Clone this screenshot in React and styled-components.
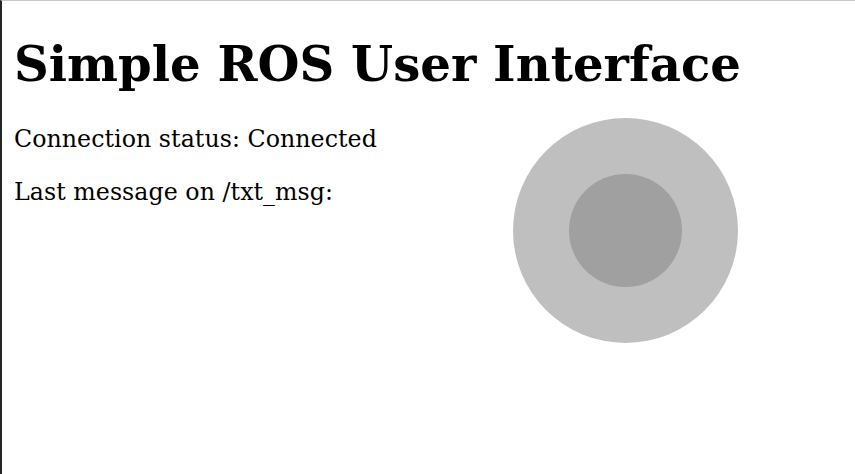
import React from 'react';
import styled, { createGlobalStyle } from 'styled-components';

const GlobalStyle = createGlobalStyle`
  html, body {
    margin: 0;
    padding: 0;
    background: #ffffff;
  }
  body {
    font-family: "DejaVu Serif", "Liberation Serif", serif;
    color: #000;
  }
`;

function App() {
  return (
    <>
      <GlobalStyle />
      <Page>
        <Title>Simple ROS User Interface</Title>
        <Row>
          <Info>
            <Line>Connection status: Connected</Line>
            <Line>Last message on /txt_msg:</Line>
          </Info>
          <JoystickZone>
            <Base>
              <Knob />
            </Base>
          </JoystickZone>
        </Row>
      </Page>
    </>
  );
}

export default App;

const Page = styled.div`
  box-sizing: border-box;
  min-height: 474px;
  border-left: 2px solid #252525;
  border-top: 1px solid #c8c8c8;
  padding: 0 12px;
  overflow: hidden;
`;

const Title = styled.h1`
  margin: 35px 0 0;
  font-size: 48.2px;
  font-weight: bold;
  line-height: 56px;
`;

const Row = styled.div`
  display: flex;
  align-items: flex-start;
`;

const Info = styled.div`
  flex: 1;
  padding-top: 33px;
`;

const Line = styled.p`
  margin: 0 0 25px;
  font-size: 23.7px;
  line-height: 28px;
  letter-spacing: 0.05px;
`;

const JoystickZone = styled.div`
  margin: 26px 105px 0 0;
`;

const Base = styled.div`
  width: 225px;
  height: 225px;
  border-radius: 50%;
  background: #bfbfbf;
  display: flex;
  align-items: center;
  justify-content: center;
`;

const Knob = styled.div`
  width: 113px;
  height: 113px;
  border-radius: 50%;
  background: #a0a0a0;
`;
